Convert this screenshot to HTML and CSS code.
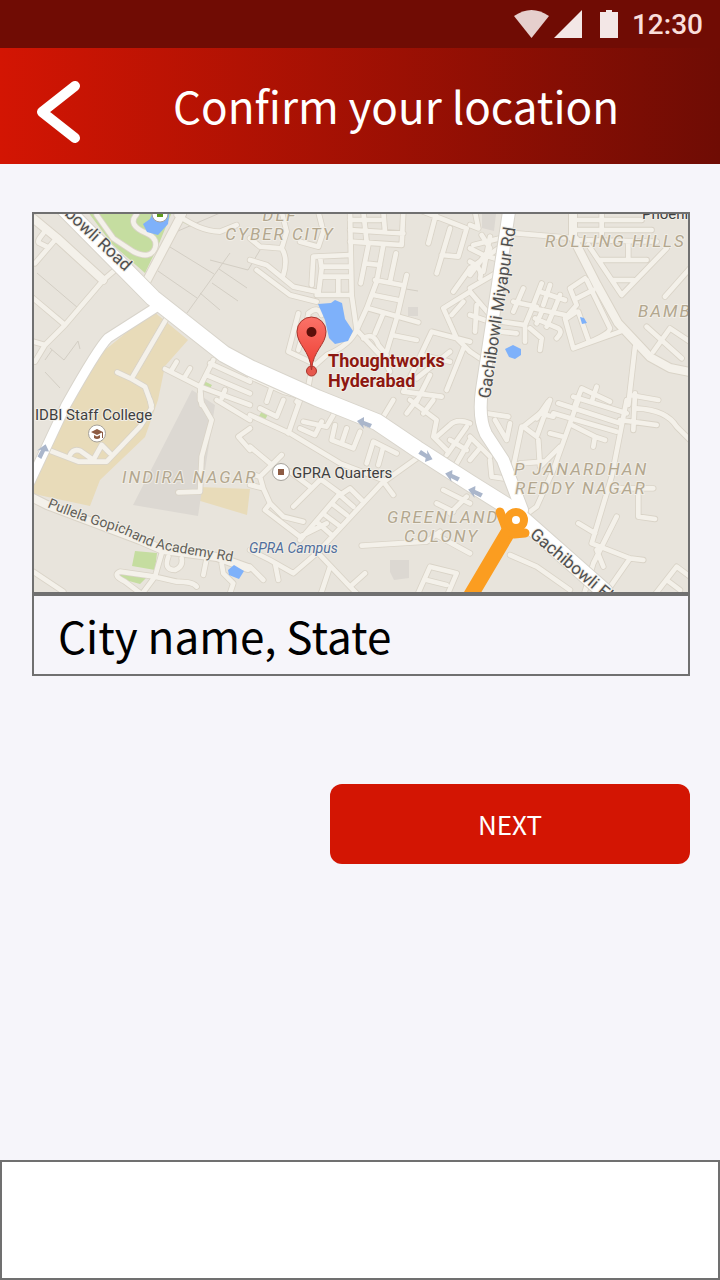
FILE: index.html
```html
<!DOCTYPE html>
<html lang="en">
<head>
<meta charset="utf-8">
<meta name="viewport" content="width=device-width, initial-scale=1">
<title>Confirm your location</title>
<link rel="stylesheet" href="styles.css">
</head>
<body>
<div class="screen">
  <div class="status">
    <svg class="status-icons" viewBox="0 0 104 28" aria-hidden="true">
      <path class="wifi" d="M0 6Q17.500-6 35 6L17.500 28Z"/>
      <path d="M68 0V28H40Z"/>
      <path d="M86 2h6V0h6v2h6v26H86Z"/>
    </svg>
    <span class="clock">12:30</span>
  </div>
  <header class="header">
    <button class="back" type="button" aria-label="Back">
      <svg viewBox="0 0 44 64" aria-hidden="true"><path d="M39 6L6 32L39 58"/></svg>
    </button>
    <h1 class="title">Confirm your location</h1>
  </header>
  <main class="content">
    <div class="map">
      <svg class="map-art" viewBox="34 214 654 378" preserveAspectRatio="xMidYMid slice" role="img" aria-label="Map of Thoughtworks Hyderabad">
        <defs>
          <g id="streets">
            <g transform="translate(30 205) scale(.33333)">
              <path d="M10 40L80 100L220 225L255 195M10 410L45 420L15 470M45 420L105 360L220 225M10 280L105 360M15 175L75 105M50 125L30 115Q20 112 30 98L42 82Q55 70 70 92"/>
              <path d="M200 30L250 100L310 140Q360 165 375 130Q385 100 350 85Q290 60 320 28M440 30C490 60 520 78 570 80L620 60M410 340L305 520M262 502L305 522L345 545L365 600"/>
              <path d="M405 492L510 545L660 600M425 495L440 470M465 515L480 490M550 465L510 545L515 600M540 475L660 530M530 510L660 565M575 580L585 555"/>
            </g>
            <g transform="translate(250 205) scale(.33333)">
              <path d="M300 20L305 270L320 375M0 165L50 180L130 245L200 260M20 195L120 270L200 290M95 130Q115 160 100 210M0 100L30 125L95 130L110 80L95 20M150 110L205 125L220 80L205 20"/>
              <path d="M185 240L190 155L300 150M210 155L215 190L205 270M215 185H300M215 215H300M200 270H300M265 215v55M300 75L460 85M460 20L455 120L300 110M340 20L350 110M400 20L405 80M300 45h90"/>
              <path d="M400 120L380 230L350 310L320 375M355 120L332 235M438 145L420 230M470 210L440 340L410 440M345 175L390 180M375 225L455 240M370 270L445 285M355 310L505 352M400 325L375 385M425 390L500 405"/>
              <path d="M320 375Q300 420 230 450L185 490L175 545M145 325L115 440L190 475M175 325Q205 300 215 330M145 435L175 330M320 375L400 460L420 500M340 400Q370 380 385 420L410 450"/>
              <path d="M560 20L535 115M600 70L560 205M575 150L625 155L650 70L520 20M610 260L660 190M660 260L580 310L620 400L660 440M640 290L605 330M460 560L545 380L660 410M515 450L600 470M500 520L600 440M590 555L640 430M460 560L575 575M500 590L540 510"/>
              <path d="M0 515L100 560L250 600M50 590L65 545M140 590L155 570"/>
            </g>
            <g transform="translate(470 205) scale(.33333)">
              <path d="M140 85L320 100M320 75H545M325 45H515M395 20V100M320 105L560 110M355 120L455 270L590 130M390 165H530M475 115V160M430 225H490M660 190L585 275"/>
              <path d="M345 220L300 250L320 300L285 340L310 430L450 380M350 225L420 370Q420 390 310 430M320 280L370 255M325 320L355 405M320 320L290 340M530 365L635 460M600 370L550 440M600 370L660 410M495 425L475 600M480 570L565 585"/>
              <path d="M215 235L190 300L165 360L60 345M160 250L130 320M130 290L200 305M240 240L220 300M190 310L285 330M270 270L250 320M285 285L210 260M195 340L265 370Q280 380 260 400M165 360V410M180 370L215 400L210 435M215 320L200 355M245 330L230 365M90 380L140 385"/>
              <path d="M0 130L40 150L90 165M0 250L85 200M0 170Q40 190 30 220M35 90L60 130L0 210M60 95L40 200M90 100L10 120M85 130L0 190M0 260L60 330M0 330L60 350M20 300L15 380M0 440L30 460M0 60L25 70L15 20"/>
              <path d="M315 600L335 550L420 590M380 545L365 590M235 590L200 640"/>
            </g>
            <g transform="translate(30 400) scale(.33333)">
              <path d="M360 0L365 25L330 80L230 185H145L55 150M120 165Q130 145 150 152L190 180L215 135L240 160M510-20V0L545 60L515 170L510 275L445 277M560 0L660 60M660 85L625 110L660 150"/>
              <path d="M10 515L100 575M395 460L375 530L270 515Q245 525 285 545L345 590M375 530L440 545Q490 545 500 560M330 590L375 530M415 470Q400 510 435 510Q460 500 455 475M530 475L520 525M575 490L580 520L610 550L600 580"/>
            </g>
            <g transform="translate(250 400) scale(.33333)">
              <path d="M0 45L120 100L270 190L400 240M30 25L80 50L100 0M150 0L115 100M160 65L230 80L250 45M150 85L195 105L215 65M255 75L245 120L310 145L330 95M290 85L275 130M350 190L370 125L440 160M385 195L400 140"/>
              <path d="M500 175L395 250L200 460L130 520L60 480L0 450M400 245L430 285M95 165L30 230L0 220M0 140L60 190M30 230L40 265L60 310L45 330L150 410L230 370M0 255L40 265M210 240L130 320M120 215L180 260M215 240L270 280L150 420M270 285L310 320M245 310L290 345M225 345L265 375M205 370L245 405M270 285L300 265L335 300M60 310L100 350L160 365"/>
              <path d="M335 437L530 425L570 395M210 465L300 560L345 520M240 500L210 590M0 500L40 540M75 490L85 540M300 560L330 590M500 590L540 500L620 520L590 590M530 540L590 555M550 400L660 460M580 270L660 310M600 340L650 290M560 310L610 335"/>
              <path d="M430 0L400 50M470 40L500 0M480 0L560 60L550 110L590 150M520 40L550 0M560 110L600 75Q620 55 660 70M590 165L650 80M620 190L660 120M600 120L650 150"/>
            </g>
            <g transform="translate(470 400) scale(.33333)">
              <path d="M210 40L160 80L200 110L240 0M50 40L115 50M75 60L110 120L120 70M155 80L130 200M210 40L250 50M325 0L250 210L200 320L160 350M250 40L440 95M265 10L450 70M310-10L470 40M240 100L280 110M205 120L210 200L270 140M305 75L375 110L405 120M375 110L370 140"/>
              <path d="M470 0L425 230L365 430L480 475L520 480M440 350L370 490L340 590M325 370L375 400M400 500L380 450M480 475L400 590M350 550L410 590M495-20L490 90M500 25Q590 30 620 80L660 120M450 60L560 75M430 265H550M505 270V350L555 357M120 465L200 500L300 570M550 590L620 500L660 530M590 540L630 570M60 180L65 230L100 235M0 110L60 170M150 190L220 185M0 180L25 150"/>
            </g>
          </g>
          <path id="avenues" d="M182 214L145 284M34 219L57 238L103 280M573 205V238L597 285L618 323L650 357L670 368L690 372M33 498L47 505L140 540L163 550L217 557L248 568"/>
          <path id="highway" d="M58 202L153 298L224 354L250 368L317 398L377 422L417 449L470 483L510 508L605 592"/>
          <path id="branch" d="M510 205L482 390Q478 418 486 434L503 460L522 510"/>
          <path id="west" d="M155 308L108 338Q98 348 66 405L30 482"/>
          <path id="academy" d="M47 507Q78 520 112 530C135 537 140 545 165 550S215 558 248 565"/>
        </defs>

        <rect class="land" x="30" y="210" width="662" height="386"/>
        <path class="campus" d="M153 311L188 340L165 366L158 400L145 437L100 480L90 506L34 494V470L70 400L100 354ZM199 487L250 489L247 515L197 500Z"/>
        <path class="block" d="M192 390L215 405L198 516L133 505ZM390 560h19v18l-15 2-4-8ZM408 307h10v9h-10ZM482 214h14l-2 17-12-3Z"/>
        <path class="park" d="M88 212H172L158 246L145 273L112 244ZM135 551L157 553L155 570L132 566ZM121 573L150 574L140 584L118 578ZM182 218l15 6-5 3-10-5ZM204 381l8 4-3 5-7-4ZM262 411l6 3-3 6-6-4Z"/>
        <path class="plots" d="M170 247L214 274M158 271L197 298M187 313L230 253M200 293L220 310M212 283L238 301M219 269L247 288M178 231L220 213M37 273L78 308M50 348L64 360L78 341L80 349M45 372L60 388M45 360L52 350M210 260L248 270L260 250M400 288l18 3"/>
        <use href="#streets" class="casing street"/>
        <use href="#avenues" class="casing avenue"/>
        <use href="#streets" class="fill street"/>
        <use href="#avenues" class="fill avenue"/>
        <path class="water" d="M143 224L150 219L155 208H170L168 224L158 235L147 232ZM318 304L331 303L335 300L342 303L345 319L353 331L348 341L335 344L329 338L325 320ZM505 349l8-4 8 4v6l-6 4-6-2ZM580 317l4 1 3 5-5 1ZM228 570l6-5 10 6-5 8-10-4Z"/>
        <use href="#west" class="major-casing west"/>
        <use href="#branch" class="major-casing branch"/>
        <use href="#highway" class="major-casing highway"/>
        <use href="#west" class="major west"/>
        <use href="#branch" class="major branch"/>
        <use href="#highway" class="major highway"/>

        <g class="arrows">
          <path id="arrow" d="M357 421L364 417V421L372 424L370 428L363 425L364 429Z"/>
          <use href="#arrow" transform="translate(88 53) rotate(4 364 423)"/>
          <use href="#arrow" transform="translate(111 69) rotate(4 364 423)"/>
          <use href="#arrow" transform="translate(62 33) rotate(190 364 423)"/>
          <use href="#arrow" transform="translate(-321 28) rotate(95 364 423)"/>
        </g>

        <g class="district">
          <text x="280" y="221" text-anchor="middle">DLF</text>
          <text x="280" y="240" text-anchor="middle">CYBER CITY</text>
          <text x="545" y="247">ROLLING HILLS</text>
          <text x="638" y="317">BAMB</text>
          <text x="122" y="483">INDIRA NAGAR</text>
          <text x="514" y="475">P JANARDHAN</text>
          <text x="515" y="494">REDDY NAGAR</text>
          <text x="387" y="523">GREENLAND</text>
          <text x="404" y="542">COLONY</text>
        </g>
        <g class="ramp">
          <path d="M468 600L507 534" class="ramp-road"/>
          <path d="M500 512L506 528L514 534L525 533M506 528L504 538" class="ramp-arm"/>
          <circle cx="516" cy="520" r="8"/>
        </g>
        <g class="place">
          <text x="35" y="420">IDBI Staff College</text>
          <text x="292" y="478">GPRA Quarters</text>
          <text x="642" y="219">Phoeni</text>
          <text class="campus-name" x="249" y="553">GPRA Campus</text>
        </g>
        <g class="road-name">
          <text transform="translate(61 212) rotate(43)">ibowli Road</text>
          <text transform="translate(490 399) rotate(-81.500)">Gachibowli Miyapur Rd</text>
          <text transform="translate(529 536) rotate(40)">Gachibowli Fl</text>
          <text class="minor"><textPath href="#academy">Pullela Gopichand Academy Rd</textPath></text>
        </g>

        <g class="poi">
          <circle cx="160" cy="214" r="8"/><path class="poi-green" d="M157 212h6v5h-6Z"/>
          <circle cx="97" cy="433.500" r="8.500"/><path class="poi-brown" d="M91 432L97 429L103 432L97 435ZM94 435l3 1.500 3-1.500v3q-3 2-6 0ZM102 432h1v6h-1Z"/>
          <circle cx="281" cy="472" r="8.500"/><path class="poi-brown" d="M278 469h6v6h-6Z"/>
        </g>
        <defs>
          <linearGradient id="pin-red" x1="0" y1="0" x2="0" y2="1"><stop offset="0" stop-color="#fb7268"/><stop offset="1" stop-color="#ec3d32"/></linearGradient>
        </defs>
        <circle class="pin-foot" cx="311.500" cy="371" r="5"/>
        <path class="pin" fill="url(#pin-red)" d="M311.500 370C310 350 297 345 297 331.500A14.500 14.500 0 0 1 326 331.500C326 345 313 350 311.500 370Z"/>
        <circle class="pin-hole" cx="311.500" cy="332" r="5"/>
        <g class="pin-name">
          <text x="328" y="367">Thoughtworks</text>
          <text x="328" y="387">Hyderabad</text>
        </g>
      </svg>
    </div>
    <input class="city" type="text" aria-label="City and state" value="City name, State">
    <button class="next" type="button">NEXT</button>
  </main>
  <footer class="bottom"></footer>
</div>
</body>
</html>
```
FILE: styles.css
```css
* { box-sizing: border-box; }

body {
  margin: 0;
  background: #f6f5fa;
  font-family: "Noto Sans CJK SC", "Noto Sans", sans-serif;
}

.screen {
  display: flex;
  flex-direction: column;
  min-height: 100vh;
}

.status {
  display: flex;
  align-items: center;
  justify-content: flex-end;
  gap: 14px;
  height: 48px;
  padding-right: 17px;
  background: #700c04;
}

.status-icons { width: 104px; height: 28px; fill: #f3e7e6; }
.wifi { fill: #e6cfcd; }

.clock {
  padding-top: 2px;
  font: 500 28px/32px Roboto, sans-serif;
  color: #f9dedb;
}

.header {
  display: flex;
  align-items: center;
  min-height: 116px;
  padding-right: 8px;
  background: linear-gradient(90deg, #d31503, #6f0c04);
}

.back {
  display: flex;
  padding: 12px 0 0 36px;
  border: 0;
  background: none;
}

.back svg {
  width: 44px;
  height: 64px;
  fill: none;
  stroke: #fff;
  stroke-width: 10;
  stroke-linecap: round;
  stroke-linejoin: round;
}

.title {
  flex: 1;
  margin: 0;
  padding-bottom: 2px;
  font-size: 44px;
  font-weight: 400;
  line-height: 64px;
  text-align: center;
  color: #fff;
}

.content {
  display: flex;
  flex-direction: column;
  padding: 48px 30px 48px 32px;
}

.map { border: 2px solid #707070; }
.map-art { display: block; width: 100%; }

.city {
  width: 100%;
  height: 82px;
  padding: 0 24px;
  border: 2px solid #707070;
  border-radius: 0;
  background: #f6f5fa;
  font: 400 44px/64px "Noto Sans CJK SC", "Noto Sans", sans-serif;
  color: #000;
}

.next {
  align-self: flex-end;
  width: 360px;
  max-width: 100%;
  height: 80px;
  margin-top: 108px;
  border: 0;
  border-radius: 12px;
  background: #d31503;
  font: 400 26px/40px "Noto Sans CJK SC", "Noto Sans", sans-serif;
  color: #fff;
}

.bottom {
  height: 120px;
  margin-top: auto;
  border: 2px solid #707070;
  background: #fff;
}

/* Map */
.land { fill: #e8e4dc; }
.campus { fill: #e8dbb9; }
.block { fill: #dcd8d2; }
.park { fill: #c5dda0; }
.water { fill: #7eb1fa; }
.plots { fill: none; stroke: #d3cec4; stroke-width: 1; }

.casing, .fill, .major, .major-casing {
  fill: none;
  stroke-linecap: round;
  stroke-linejoin: round;
}
.casing { stroke: #d9d3c7; }
.fill { stroke: #f4f1ea; }
.street.casing { stroke-width: 19; }
.street.fill { stroke-width: 14; }
.avenue.casing { stroke-width: 10; }
.avenue.fill { stroke-width: 8; }
.major { stroke: #fff; }
.major-casing { stroke: #d8d4cb; }
.major.west { stroke-width: 9; }
.major-casing.west { stroke-width: 11; }
.major.branch { stroke-width: 12; }
.major-casing.branch { stroke-width: 14; }
.major.highway { stroke-width: 16; }
.major-casing.highway { stroke-width: 18; }

.ramp { fill: none; stroke: #fb9d20; stroke-linecap: round; stroke-linejoin: round; }
.ramp-road { stroke-width: 15; }
.ramp-arm { stroke-width: 9; }
.ramp circle { fill: #fff; stroke-width: 8; }
.arrows { fill: #aab6cb; }

.map-art text { font-family: Roboto, sans-serif; paint-order: stroke; stroke: #f1eee7; stroke-width: 2px; stroke-linejoin: round; }
.district { font-size: 17px; font-style: italic; letter-spacing: 2px; fill: #b3a78f; }
.place { font-size: 15px; fill: #3f3f3f; }
.campus-name { font-size: 14px; font-style: italic; fill: #4f6d9c; }
.road-name { font-size: 17px; fill: #4f4f4f; }
.minor { font-size: 14px; fill: #625f58; }
.pin-name { font-size: 18px; font-weight: 700; fill: #8d1710; }

.poi { fill: #fff; stroke: #a6a29b; stroke-width: 1; }
.poi-brown { fill: #8d5b43; stroke: none; }
.poi-green { fill: #5f9c1d; stroke: none; }
.pin { stroke: #a8352c; stroke-width: 1; }
.pin-foot { fill: #e6584d; stroke: #a8352c; stroke-width: 1; }
.pin-hole { fill: #5b0f0a; }
```
